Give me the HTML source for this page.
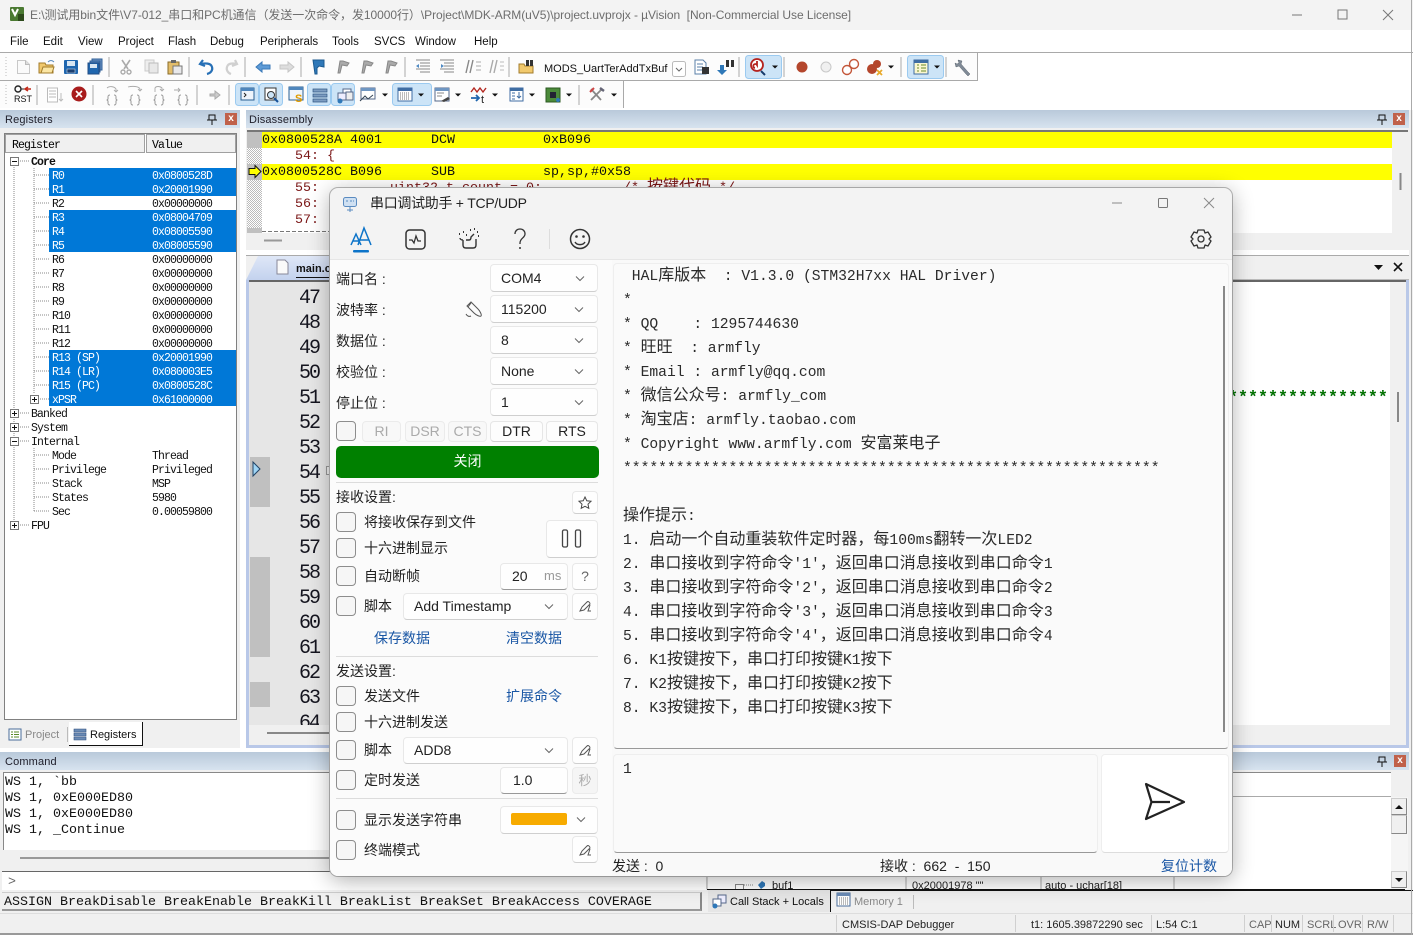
<!DOCTYPE html>
<html lang="zh"><head><meta charset="utf-8"><title>µVision</title>
<style>
html,body{margin:0;padding:0;width:1413px;height:935px;overflow:hidden;background:#f0f0f0}
body{position:relative;font-family:"Liberation Sans","Noto Sans CJK SC",sans-serif;color:#000}
div,span.a,b.a{position:absolute;white-space:pre}
svg.o{position:absolute;left:0;top:0;width:1413px;height:935px;pointer-events:none}
.m{font:11.5px "Liberation Sans",sans-serif;top:36px;color:#111}
.hd{background:linear-gradient(#b9c9da,#d7e3ef);height:18px;font-size:11px;letter-spacing:.15px;line-height:20px;color:#20202c}
.r{font:11.5px/18px "Liberation Mono","Noto Sans CJK SC",monospace;letter-spacing:-.9px;left:52px;height:14px;color:#111}
.v{left:152px}
.s{background:#0078d7;color:#fff;left:49px;width:187px;height:14px}
.s span{position:absolute;top:0;font:11.5px/18px "Liberation Mono",monospace;letter-spacing:-.9px}
.mono{font:13.33px/16px "Liberation Mono","Noto Sans CJK SC",monospace;color:#111;margin-top:1px}
.dr{color:#7a1616}
.gn{font:20px/25px "Liberation Mono",monospace;left:299px;letter-spacing:-2px;color:#15151f;margin-top:3px}
.st{font-size:11px;top:919px;color:#222}
.stg{color:#666}
#dlg{left:330px;top:188px;width:902px;height:688px;background:#f3f3f3;border-radius:8px;box-shadow:0 4px 22px rgba(0,0,0,.32),0 0 0 1px #bdbdbd;z-index:10}
.D{z-index:11;font-size:14px;line-height:20px;color:#222}
.l{left:336px;color:#222}
.c{background:#fefefe;border:1px solid #e8e8e8;border-bottom-color:#cfcfcf;border-radius:4px;box-sizing:border-box}
.c span{position:absolute;left:10px;top:4px;font-size:14px;line-height:18px;color:#222}
.k{width:20px;height:20px;left:336px;background:#f6f6f6;border:1px solid #8d8d8d;border-radius:4px;box-sizing:border-box}
.sg{top:421px;height:21px;box-sizing:border-box;background:#fdfdfd;border:1px solid #e6e6e6;border-bottom-color:#d0d0d0;border-radius:4px;text-align:center;font-size:14px;line-height:19px;color:#222}
.dis{background:#f8f8f8;color:#aaa;border-color:#ebebeb}
.h{left:336px;width:262px;height:1px;background:#dcdcdc}
.lk{color:#1a57a5}
.t{font:14.67px/24px "Liberation Mono",monospace;left:623px;color:#2a2a2a;margin-top:4px}
.t i{font:normal 16px/0 "Noto Sans CJK SC",sans-serif}
</style></head><body>

<!-- title bar -->
<div style="left:0;top:0;width:1413px;height:30px;background:#f3f3f3"></div>
<div style="left:30px;top:8px;font-size:12px;letter-spacing:-.06px;line-height:14px;color:#6d6d6d">E:\测试用bin文件\V7-012_串口和PC机通信（发送一次命令，发10000行）\Project\MDK-ARM(uV5)\project.uvprojx - µVision  [Non-Commercial Use License]</div>
<div style="left:0;top:30px;width:1413px;height:80px;background:#fff"></div>
<div class="m" style="left:10px">File</div><div class="m" style="left:43px">Edit</div><div class="m" style="left:78px">View</div><div class="m" style="left:118px">Project</div><div class="m" style="left:168px">Flash</div><div class="m" style="left:210px">Debug</div><div class="m" style="left:260px">Peripherals</div><div class="m" style="left:332px">Tools</div><div class="m" style="left:374px">SVCS</div><div class="m" style="left:415px">Window</div><div class="m" style="left:474px">Help</div>

<!-- toolbars -->
<div style="left:0;top:52px;width:1413px;height:1px;background:#a9a9a9"></div>
<div style="left:0;top:53px;width:977px;height:27px;background:#fcfcfc;border-right:1px solid #a9a9a9;border-bottom:1px solid #a9a9a9"></div>
<div style="left:0;top:81px;width:623px;height:27px;background:#fcfcfc;border-right:1px solid #a9a9a9"></div>
<div style="left:544px;top:62px;font-size:11px;line-height:14px;color:#111">MODS_UartTerAddTxBuf</div>

<svg class="o" viewBox="0 0 1413 935">
<defs>
<g id="dn"><path d="M-3-1.500h6L0 1.500z" fill="#111"/></g>
<g id="br"><path d="M-2-3c-2 0-2 1-2 2v2l-1 1 1 1v2c0 1 0 2 2 2M2-3c2 0 2 1 2 2v2l1 1-1 1v2c0 1 0 2-2 2" fill="none" stroke="#999" transform="translate(0,2)"/></g>
<g id="fl"><path d="M-5 6 L-3-6h3l6 2-2 3-5-1-2 8z" fill="#aaa" stroke="#888"/></g>
</defs>
<!-- app icon -->
<rect x="10" y="7" width="14" height="14" rx="1" fill="#4b7a32"/><path d="M12 9l3 6 3-6" stroke="#fff" stroke-width="2" fill="none"/><rect x="18" y="14" width="6" height="7" fill="#2d4a1c"/>
<!-- window controls -->
<path d="M1292 15h10" stroke="#777"/><rect x="1338" y="10" width="9" height="9" fill="none" stroke="#777"/><path d="M1383 10l10 10M1393 10l-10 10" stroke="#777"/>
<!-- seps -->
<path d="M109 57v20M189 57v20M245 57v20M301 57v20M405 57v20M509 57v20M739 57v20M784 57v20M901 57v20M946 57v20" stroke="#aaa" />
<path d="M6 57v20" stroke="#bbb" stroke-dasharray="1 2"/>
<path d="M6 85v20" stroke="#bbb" stroke-dasharray="1 2"/>
<path d="M37 85v20M93 85v20M197 85v20M229 85v20M579 85v20" stroke="#aaa"/>
<!-- highlights row1 -->
<rect x="745.500" y="55.500" width="36" height="23" rx="3" fill="#cce4f7" stroke="#9bcaf0"/>
<rect x="907.500" y="55.500" width="36" height="23" rx="3" fill="#cce4f7" stroke="#9bcaf0"/>
<!-- highlights row2 -->
<rect x="235.500" y="83.500" width="23" height="22" rx="3" fill="#cce4f7" stroke="#9bcaf0"/>
<rect x="259.500" y="83.500" width="23" height="22" rx="3" fill="#cce4f7" stroke="#9bcaf0"/>
<rect x="307.500" y="83.500" width="23" height="22" rx="3" fill="#cce4f7" stroke="#9bcaf0"/>
<rect x="331.500" y="83.500" width="23" height="22" rx="3" fill="#cce4f7" stroke="#9bcaf0"/>
<rect x="392.500" y="83.500" width="39" height="22" rx="3" fill="#cce4f7" stroke="#9bcaf0"/>
<!-- row1 icons -->
<path d="M17.500 60.500h8l4 4v9h-12z" fill="#fafafa" stroke="#c8c8c8"/><path d="M25.500 60.500v4h4" fill="#ddd" stroke="#bbb"/>
<path d="M39 63h6l1 2h7v8H39z" fill="#f1c96d" stroke="#a27c2b"/><path d="M41 73l2-6h11l-2 6z" fill="#fbe6a4" stroke="#a27c2b"/><path d="M48 62c2-2 4-2 6 0" stroke="#5a8bbd" fill="none"/>
<rect x="64" y="60" width="14" height="14" rx="1" fill="#1f66ae"/><rect x="67" y="61" width="8" height="5" fill="#d8e6f2"/><rect x="67" y="69" width="8" height="4" fill="#1a3f70" stroke="#c8d6e6" stroke-width=".6"/>
<rect x="92" y="59" width="10" height="11" fill="#6f96c2" stroke="#2f5f99"/><rect x="90" y="61" width="10" height="11" fill="#4f80b6" stroke="#2f5f99"/><rect x="88" y="63" width="11" height="11" fill="#1f66ae" stroke="#214d85"/><rect x="90" y="64" width="7" height="4" fill="#d8e6f2"/>
<path d="M122 60l6 9M130 60l-6 9" stroke="#aaa" stroke-width="1.600"/><circle cx="123" cy="72" r="2" fill="none" stroke="#aaa" stroke-width="1.400"/><circle cx="129" cy="72" r="2" fill="none" stroke="#aaa" stroke-width="1.400"/>
<rect x="145" y="60" width="9" height="11" fill="#eee" stroke="#ccc"/><rect x="149" y="63" width="9" height="10" fill="#e8e8e8" stroke="#bbb"/>
<rect x="168" y="62" width="11" height="12" fill="#e3bd6a" stroke="#8a6d2a"/><rect x="171" y="60" width="5" height="3" fill="#666"/><rect x="173" y="66" width="9" height="8" fill="#e8e8ea" stroke="#777"/>
<path d="M203 60l-3 4 5 2M201 64c4-1 10-1 11 3 1 3-1 6-5 7" fill="none" stroke="#2770b6" stroke-width="2.200"/>
<path d="M235 60l2 4-5 2M237 64c-4-1-9-1-10 3-1 3 1 6 4 7" fill="none" stroke="#d0d0d0" stroke-width="2.200"/>
<path d="M256 67l6-5v3h8v4h-8v3z" fill="#5d9ad6" stroke="#3a79b8"/>
<path d="M294 67l-6-5v3h-8v4h8v3z" fill="#ddd" stroke="#c6c6c6"/>
<path d="M313 60h11v7l-5-1-2 2v6h-2z" fill="#2f78b8" stroke="#1b5a90"/>
<use href="#fl" x="343" y="67"/><use href="#fl" x="367" y="67"/><use href="#fl" x="391" y="67"/>
<path d="M416 60h14M420 63h10M420 66h10M416 69h14M420 72h10" stroke="#888" /><path d="M416 66l3-2v4z" fill="#4f8ac4"/>
<path d="M440 60h14M444 63h10M444 66h10M440 69h14M444 72h10" stroke="#888"/><path d="M444 66l-3-2v4z" fill="#4f8ac4"/>
<path d="M466 73l3-13M470 73l3-13" stroke="#888" stroke-width="1.400"/><path d="M476 62h5M476 66h5M476 70h5" stroke="#aaa"/>
<path d="M490 73l3-13M494 73l3-13" stroke="#aaa" stroke-width="1.400"/><path d="M500 62h4M500 66h4M500 70h4" stroke="#bbb"/>
<path d="M519 64h5l1 2h8v7h-14z" fill="#f1c96d" stroke="#a27c2b"/><rect x="526" y="60" width="3" height="6" fill="#333"/><rect x="530" y="60" width="3" height="6" fill="#333"/>
<rect x="672.500" y="61.500" width="13" height="15" rx="2" fill="#fff" stroke="#bbb"/><path d="M676 68l3 3 3-3" fill="none" stroke="#666"/>
<path d="M695 60h8l3 3v11h-11z" fill="#fff" stroke="#5a7fa8"/><path d="M697 64h6M697 67h6M697 70h6" stroke="#5a7fa8"/><rect x="702" y="67" width="7" height="7" fill="#333"/>
<path d="M720 65h4v5h3l-5 5-5-5h3z" fill="#2f78b8"/><rect x="726" y="60" width="3" height="7" fill="#333"/><rect x="731" y="60" width="3" height="7" fill="#333"/>
<circle cx="757" cy="65" r="6" fill="#fff" stroke="#b4231f" stroke-width="1.800"/><path d="M755 68a2 2 0 1 1 2-3v-4" fill="none" stroke="#b4231f" stroke-width="1.800"/><path d="M761 71l4 4" stroke="#173a6a" stroke-width="2"/>
<use href="#dn" x="775" y="67"/><use href="#dn" x="891" y="67"/><use href="#dn" x="937" y="67"/>
<circle cx="802" cy="67" r="5.500" fill="#b4462c"/>
<circle cx="826" cy="67" r="5" fill="#f0f0f0" stroke="#c8c8c8"/>
<circle cx="854" cy="64" r="4.500" fill="#fff" stroke="#c4573a" stroke-width="1.400"/><circle cx="847" cy="70" r="4.500" fill="#fff" stroke="#c4573a" stroke-width="1.400"/>
<circle cx="877" cy="64" r="4" fill="#b4462c"/><circle cx="872" cy="69" r="5" fill="#b4462c"/><path d="M877 70l5 5M882 70l-5 5" stroke="#e8a92b" stroke-width="1.800"/>
<rect x="914" y="60" width="14" height="14" fill="#fbf7d0" stroke="#3f6da3"/><rect x="914" y="60" width="14" height="3" fill="#3f6da3"/><path d="M917 65h2M921 65h5M917 68h2M921 68h5M917 71h2M921 71h5" stroke="#6a8a2a"/>
<path d="M958 60l4 1-1 3 7 8 2 2-2 2-2-2-7-8-3 1-1-4 2 1 2-1z" fill="#808a96" stroke="#5c6670" stroke-width=".5"/>
<!-- row2 icons -->
<circle cx="18" cy="89" r="3" fill="none" stroke="#222" stroke-width="1.400"/><path d="M21 89h5" stroke="#222"/><path d="M25 89h6M28 87l-3 2 3 2" stroke="#c42b1c" stroke-width="1.600" fill="none"/>
<text x="14" y="102" font-family="Liberation Sans" font-size="9" fill="#111">RST</text>
<path d="M47.500 88h10v14h-10z" fill="#fff" stroke="#bbb"/><path d="M49 91h7M49 94h7M49 97h7" stroke="#bbb"/><path d="M61 93v8M59 99l2 2 2-2" stroke="#bbb" fill="none"/>
<circle cx="79" cy="94" r="7.500" fill="#a81c1c"/><path d="M76 91l6 6M82 91l-6 6" stroke="#fff" stroke-width="1.600"/>
<use href="#br" x="112" y="96"/><use href="#br" x="135" y="96"/><use href="#br" x="159" y="96"/><use href="#br" x="183" y="96"/>
<path d="M107 88c2-2 7-2 9 1v3M114 90l2 2 2-2M128 87c4-1 11-1 12 2v2M138 89l2 2 2-2M155 92v-4c1-2 5-2 7 0v3M160 89l2 2 2-2M174 90h6M178 88l2 2-2 2" fill="none" stroke="#aaa" stroke-width=".9"/>
<path d="M210 94l5 0v-3l5 4-5 4v-3h-5z" fill="#ccc" stroke="#aaa"/>
<rect x="241" y="88" width="13" height="12" fill="#eef4fb" stroke="#2a5f93"/><rect x="241" y="88" width="13" height="3" fill="#4f86bc"/><path d="M244 93l2 2-2 2" stroke="#222" fill="none"/>
<rect x="265" y="88" width="11" height="12" fill="#fff" stroke="#333"/><circle cx="271" cy="95" r="3.500" fill="#cce4f7" stroke="#333"/><path d="M274 98l4 4" stroke="#17539a" stroke-width="2"/>
<rect x="289" y="87" width="14" height="13" fill="#eef4fb" stroke="#2a5f93"/><rect x="289" y="87" width="14" height="3" fill="#4f86bc"/><text x="295" y="102" font-family="Liberation Sans" font-weight="bold" font-size="11" fill="#e09b00">S</text>
<path d="M313 89h14v3h-14zM313 94h14v3h-14zM313 99h14v3h-14z" fill="#7d9dc1" stroke="#2f5783" stroke-width=".7"/>
<rect x="343" y="89" width="8" height="8" fill="#fff" stroke="#56688a"/><rect x="346" y="92" width="7" height="8" fill="#eee" stroke="#56688a"/><rect x="338" y="93" width="8" height="7" fill="#eef" stroke="#56688a"/><circle cx="340" cy="101" r="2.500" fill="#2f78b8"/>
<rect x="361" y="88" width="14" height="11" fill="#fff" stroke="#56688a"/><rect x="361" y="88" width="14" height="3" fill="#6f96c2"/><path d="M360 101l5-5 3 3 5-4" stroke="#345" fill="none"/>
<use href="#dn" x="385" y="95"/>
<rect x="398" y="88" width="14" height="13" fill="#fff" stroke="#3f6da3"/><rect x="398" y="88" width="14" height="3" fill="#3f6da3"/><path d="M400 93h10M400 95h10M400 97h10M400 99h10" stroke="#777" stroke-dasharray="1 1"/>
<use href="#dn" x="421" y="95"/>
<rect x="435" y="88" width="14" height="13" fill="#fff" stroke="#56688a"/><rect x="435" y="88" width="14" height="3" fill="#6f96c2"/><path d="M437 93h7M437 96h5" stroke="#888"/><path d="M441 101l7-4 2 2-6 3z" fill="#444"/>
<use href="#dn" x="458" y="95"/>
<path d="M471 92l3-4 3 4 3-4 3 4 3-4" fill="none" stroke="#b3271f" stroke-width="1.400"/><path d="M471 98h8M476 95l3 3-3 3" stroke="#1f66ae" stroke-width="1.800" fill="none"/><text x="481" y="103" font-family="Liberation Sans" font-size="11" fill="#222">t</text>
<use href="#dn" x="495" y="95"/>
<rect x="510" y="88" width="13" height="13" fill="#fff" stroke="#3f6da3"/><rect x="510" y="88" width="13" height="3" fill="#3f6da3"/><path d="M512 93h3M512 96h3M512 99h3M519 92v6M517 96l2 2 2-2" stroke="#3f6da3" fill="none"/>
<use href="#dn" x="532" y="95"/>
<rect x="546" y="88" width="14" height="14" fill="#4b8a3a" stroke="#2d5a22"/><rect x="550" y="92" width="6" height="6" fill="#223"/><circle cx="558" cy="100" r="2" fill="#2f78b8"/>
<use href="#dn" x="569" y="95"/>
<path d="M591 89l10 11M602 89l-11 11" stroke="#888" stroke-width="1.800"/><path d="M590 92l4-4" stroke="#c44" stroke-width="2"/><path d="M600 88l4 3" stroke="#667" stroke-width="2.400"/>
<use href="#dn" x="614" y="95"/>
</svg>

<!-- panel headers -->
<div class="hd" style="left:0;top:110px;width:240px"><span style="position:absolute;left:5px">Registers</span></div>
<div style="left:240px;top:110px;width:6px;height:22px;background:#fff"></div>
<div class="hd" style="left:246px;top:110px;width:1163px"><span style="position:absolute;left:3px">Disassembly</span></div>
<div style="left:225px;top:113px;width:12px;height:12px;background:#c0614a;color:#fff;font:bold 10px/12px 'Liberation Sans';text-align:center">x</div>
<div style="left:1393px;top:113px;width:12px;height:12px;background:#c0614a;color:#fff;font:bold 10px/12px 'Liberation Sans';text-align:center">x</div>

<!-- registers panel -->
<div style="left:0;top:128px;width:240px;height:594px;background:#f0f0f0"></div>
<div style="left:4px;top:133px;width:233px;height:587px;background:#fff;border:1px solid #808080;box-sizing:border-box"></div>
<div style="left:5px;top:134px;width:140px;height:19px;background:#f0f0f0;border:1px solid #a0a0a0;box-sizing:border-box;font:11.5px/22px 'Liberation Mono';letter-spacing:-.9px;padding-left:6px">Register</div>
<div style="left:146px;top:134px;width:90px;height:19px;background:#f0f0f0;border:1px solid #a0a0a0;box-sizing:border-box;font:11.5px/22px 'Liberation Mono';letter-spacing:-.9px;padding-left:5px">Value</div>
<div class="r" style="left:31px;top:154px;font-weight:bold">Core</div>
<div class="s" style="top:168px"><span style="left:3px">R0</span><span style="left:103px">0x0800528D</span></div>
<div class="s" style="top:182px"><span style="left:3px">R1</span><span style="left:103px">0x20001990</span></div>
<div class="r" style="top:196px">R2</div><div class="r v" style="top:196px">0x00000000</div>
<div class="s" style="top:210px"><span style="left:3px">R3</span><span style="left:103px">0x08004709</span></div>
<div class="s" style="top:224px"><span style="left:3px">R4</span><span style="left:103px">0x08005590</span></div>
<div class="s" style="top:238px"><span style="left:3px">R5</span><span style="left:103px">0x08005590</span></div>
<div class="r" style="top:252px">R6</div><div class="r v" style="top:252px">0x00000000</div>
<div class="r" style="top:266px">R7</div><div class="r v" style="top:266px">0x00000000</div>
<div class="r" style="top:280px">R8</div><div class="r v" style="top:280px">0x00000000</div>
<div class="r" style="top:294px">R9</div><div class="r v" style="top:294px">0x00000000</div>
<div class="r" style="top:308px">R10</div><div class="r v" style="top:308px">0x00000000</div>
<div class="r" style="top:322px">R11</div><div class="r v" style="top:322px">0x00000000</div>
<div class="r" style="top:336px">R12</div><div class="r v" style="top:336px">0x00000000</div>
<div class="s" style="top:350px"><span style="left:3px">R13 (SP)</span><span style="left:103px">0x20001990</span></div>
<div class="s" style="top:364px"><span style="left:3px">R14 (LR)</span><span style="left:103px">0x080003E5</span></div>
<div class="s" style="top:378px"><span style="left:3px">R15 (PC)</span><span style="left:103px">0x0800528C</span></div>
<div class="s" style="top:392px"><span style="left:3px">xPSR</span><span style="left:103px">0x61000000</span></div>
<div class="r" style="left:31px;top:406px">Banked</div>
<div class="r" style="left:31px;top:420px">System</div>
<div class="r" style="left:31px;top:434px">Internal</div>
<div class="r" style="top:448px">Mode</div><div class="r v" style="top:448px">Thread</div>
<div class="r" style="top:462px">Privilege</div><div class="r v" style="top:462px">Privileged</div>
<div class="r" style="top:476px">Stack</div><div class="r v" style="top:476px">MSP</div>
<div class="r" style="top:490px">States</div><div class="r v" style="top:490px">5980</div>
<div class="r" style="top:504px">Sec</div><div class="r v" style="top:504px">0.00059800</div>
<div class="r" style="left:31px;top:518px">FPU</div>
<svg class="o" viewBox="0 0 1413 935">
<path d="M14 165V521M34 168V394M34 448V511" stroke="#888" stroke-dasharray="1 1" fill="none"/>
<path d="M18 161h12M18 413h12M18 427h12M18 441h12M18 525h12M34 175h15M34 189h15M34 203h15M34 217h15M34 231h15M34 245h15M34 259h15M34 273h15M34 287h15M34 301h15M34 315h15M34 329h15M34 343h15M34 357h15M34 371h15M34 385h15M38 399h11M34 455h15M34 469h15M34 483h15M34 497h15M34 511h15" stroke="#888" stroke-dasharray="1 1"/>
<g fill="#fff" stroke="#777"><rect x="10.500" y="157.500" width="8" height="8"/><rect x="10.500" y="409.500" width="8" height="8"/><rect x="10.500" y="423.500" width="8" height="8"/><rect x="10.500" y="437.500" width="8" height="8"/><rect x="10.500" y="521.500" width="8" height="8"/><rect x="30.500" y="395.500" width="8" height="8"/></g>
<path d="M12 161.500h5M12 413.500h5M14.500 411v5M12 427.500h5M14.500 425v5M12 441.500h5M12 525.500h5M14.500 523v5M32 399.500h5M34.500 397v5" stroke="#111"/>
<!-- pins -->
<path d="M209 115h6v5h-6zM212 120v5M207 120h10" stroke="#111" fill="none"/>
<path d="M1379 115h6v5h-6zM1382 120v5M1377 120h10" stroke="#111" fill="none"/>
</svg>

<!-- bottom-left tabs -->
<div style="left:0;top:722px;width:240px;height:26px;background:#f0f0f0"></div>
<div style="left:69px;top:722px;width:74px;height:24px;background:#fff;border-right:1px solid #111;border-bottom:1px solid #111;box-sizing:border-box"></div>
<div style="left:25px;top:728px;font-size:11px;line-height:14px;color:#888">Project</div>
<div style="left:90px;top:728px;font-size:11px;line-height:14px;color:#111">Registers</div>
<svg class="o" viewBox="0 0 1413 935"><rect x="9" y="729" width="12" height="11" fill="#fff" stroke="#4a6d9a"/><path d="M11 732h2M14 732h5M11 734.500h2M14 734.500h5M11 737h2M14 737h5" stroke="#5a8a2a"/><path d="M74 729h12v3h-12zM74 733h12v3h-12zM74 737h12v3h-12z" fill="#6b8bb5" stroke="#2f4f7f" stroke-width=".6"/><path d="M67.500 727v15" stroke="#bbb"/></svg>

<!-- disassembly -->
<div style="left:240px;top:128px;width:6px;height:620px;background:#fff"></div>
<div style="left:246px;top:128px;width:1163px;height:122px;background:#f0f0f0"></div>
<div style="left:247px;top:130px;width:1161px;height:2px;background:#777"></div>
<div style="left:247px;top:132px;width:1145px;height:101px;background:#fff"></div>
<div style="left:247px;top:132px;width:15px;height:101px;background:#fff repeating-conic-gradient(#bbb 0 25%,#fff 0 50%) 0 0/2px 2px"></div>
<div style="left:247px;top:132px;width:15px;height:16px;background:#c0c0c0"></div>
<div style="left:247px;top:164px;width:15px;height:16px;background:#c0c0c0"></div>
<div style="left:247px;top:228px;width:15px;height:5px;background:#c0c0c0"></div>
<div style="left:262px;top:132px;width:1130px;height:16px;background:#ff0"></div>
<div style="left:262px;top:164px;width:1130px;height:16px;background:#ff0"></div>
<div class="mono" style="left:262px;top:132px">0x0800528A 4001</div><div class="mono" style="left:431px;top:132px">DCW</div><div class="mono" style="left:543px;top:132px">0xB096</div>
<div class="mono dr" style="left:295px;top:148px">54: {</div>
<div class="mono" style="left:262px;top:164px">0x0800528C B096</div><div class="mono" style="left:431px;top:164px">SUB</div><div class="mono" style="left:543px;top:164px">sp,sp,#0x58</div>
<div class="mono dr" style="left:295px;top:180px">55:</div><div class="mono dr" style="left:390px;top:180px">uint32_t count = 0;</div>
<div class="mono dr" style="left:623px;top:180px">/* <span style="font-size:16px;line-height:0">按键代码</span> */</div>
<div class="mono dr" style="left:295px;top:196px">56:</div>
<div class="mono dr" style="left:295px;top:212px">57:</div>
<svg class="o" viewBox="0 0 1413 935"><path d="M262 231.500h68" stroke="#777" stroke-dasharray="4 2"/><path d="M264 240.500h18" stroke="#999" stroke-width="2"/><path d="M1400.500 173v17" stroke="#888" stroke-width="2"/>
<path d="M249 168.500h6v-3l6 6-6 6v-3h-6z" fill="#ff0" stroke="#111"/></svg>

<!-- editor -->
<div style="left:246px;top:250px;width:1163px;height:5px;background:#fff"></div>
<div style="left:246px;top:255px;width:1163px;height:494px;background:#f0f0f0;border-top:1px solid #aaa;box-sizing:border-box"></div>
<div style="left:246px;top:256px;width:84px;height:24px;background:linear-gradient(#dfe7f7,#c3d2ee);clip-path:polygon(12px 0,100% 0,100% 100%,0 100%,0 24px)"></div>
<div style="left:296px;top:262px;font:bold 11px/14px 'Liberation Sans';color:#111;border-bottom:1px solid #111;padding-bottom:1px;width:34px">main.c</div>
<div style="left:1233px;top:279px;width:176px;height:1px;background:#bbb"></div>
<div style="left:247px;top:280px;width:1159px;height:2px;background:#666"></div>
<div style="left:246px;top:280px;width:3px;height:468px;background:#b9c8e8"></div>
<div style="left:1406px;top:280px;width:3px;height:468px;background:#b9c8e8"></div>
<div style="left:246px;top:745px;width:1163px;height:3px;background:#b9c8e8"></div>
<div style="left:249px;top:282px;width:1141px;height:443px;background:#fff"></div>
<div style="left:249px;top:282px;width:84px;height:443px;background:#e6e6e6;overflow:hidden"></div>
<div style="left:250px;top:457px;width:20px;height:50px;background:#c0c0c0"></div>
<div style="left:250px;top:557px;width:20px;height:100px;background:#c0c0c0"></div>
<div style="left:250px;top:682px;width:20px;height:25px;background:#c0c0c0"></div>
<div class="gn" style="top:283px">47</div><div class="gn" style="top:308px">48</div><div class="gn" style="top:333px">49</div><div class="gn" style="top:358px">50</div><div class="gn" style="top:383px">51</div><div class="gn" style="top:408px">52</div><div class="gn" style="top:433px">53</div><div class="gn" style="top:458px">54</div><div class="gn" style="top:483px">55</div><div class="gn" style="top:508px">56</div><div class="gn" style="top:533px">57</div><div class="gn" style="top:558px">58</div><div class="gn" style="top:583px">59</div><div class="gn" style="top:608px">60</div><div class="gn" style="top:633px">61</div><div class="gn" style="top:658px">62</div><div class="gn" style="top:683px">63</div><div class="gn" style="top:708px;height:14px;overflow:hidden">64</div>
<div style="left:1228px;top:391px;font:bold 16.67px/16px 'Liberation Mono';color:#007000">****************</div>
<svg class="o" viewBox="0 0 1413 935">
<path d="M253 462l7 7-7 7z" fill="#9ed4f4" stroke="#246"/>
<rect x="326.500" y="466.500" width="8" height="8" fill="#eee" stroke="#999"/>
<path d="M1374 265h9l-4.500 5z" fill="#111"/><path d="M1394 263l8 8M1402 263l-8 8" stroke="#111" stroke-width="1.600"/>
<path d="M1398 392v30" stroke="#888" stroke-width="2"/><path d="M267 733h63" stroke="#888" stroke-width="2"/>
<path d="M277 260h8l3 3v11h-11z" fill="#fafafa" stroke="#889"/>
</svg>

<!-- command panel -->
<div style="left:0;top:748px;width:1409px;height:4px;background:#fff"></div>
<div class="hd" style="left:0;top:752px;width:1409px"><span style="position:absolute;left:5px">Command</span></div>
<div style="left:1394px;top:755px;width:12px;height:12px;background:#c0614a;color:#fff;font:bold 10px/12px 'Liberation Sans';text-align:center">x</div>
<div style="left:0;top:770px;width:1409px;height:120px;background:#f0f0f0"></div>
<div style="left:3px;top:772px;width:1388px;height:78px;background:#fff;border-top:1px solid #888;border-left:1px solid #888;box-sizing:border-box"></div>
<div class="mono" style="left:5px;top:774px">WS 1, `bb</div>
<div class="mono" style="left:5px;top:790px">WS 1, 0xE000ED80</div>
<div class="mono" style="left:5px;top:806px">WS 1, 0xE000ED80</div>
<div class="mono" style="left:5px;top:822px">WS 1, _Continue</div>
<div style="left:20px;top:857px;width:320px;height:2px;background:#999"></div>
<div style="left:2px;top:871px;width:704px;height:1px;background:#666"></div>
<div style="left:2px;top:872px;width:704px;height:18px;background:#fff"></div>
<div class="mono" style="left:8px;top:874px;color:#666">&gt;</div>
<!-- right of dialog -->
<div style="left:707px;top:797px;width:684px;height:92px;background:#fff"></div>
<div style="left:1232px;top:796px;width:159px;height:1px;background:#aaa"></div>
<div style="left:1391px;top:772px;width:17px;height:25px;background:#f0f0f0"></div>
<div style="left:1391px;top:797px;width:17px;height:92px;background:#f5f5f5"></div>
<div style="left:1391px;top:798px;width:16px;height:17px;background:#f0f0f0;border:1px solid #ccc;border-right-color:#888;border-bottom-color:#888;box-sizing:border-box"></div>
<div style="left:1391px;top:815px;width:16px;height:19px;background:#f0f0f0;border:1px solid #ccc;border-right-color:#888;border-bottom-color:#888;box-sizing:border-box"></div>
<div style="left:1391px;top:871px;width:16px;height:17px;background:#f0f0f0;border:1px solid #ccc;border-right-color:#888;border-bottom-color:#888;box-sizing:border-box"></div>
<div style="left:772px;top:879px;font-size:11px;line-height:14px;height:10px;overflow:hidden;color:#222">buf1</div>
<div style="left:912px;top:879px;font-size:11px;line-height:14px;height:10px;overflow:hidden;color:#222">0x20001978 ""</div>
<div style="left:1045px;top:879px;font-size:11px;line-height:14px;height:10px;overflow:hidden;color:#222">auto - uchar[18]</div>
<svg class="o" viewBox="0 0 1413 935">
<path d="M1379 757h6v5h-6zM1382 762v5M1377 762h10" stroke="#111" fill="none"/>
<path d="M1395 809l4-4 4 4z M1395 878l4 4 4-4z" fill="#111"/>
<path d="M707 876v13M906 876v13M1041 876v13M1174 876v13" stroke="#aaa"/>
<rect x="735.500" y="884.500" width="8" height="8" fill="#fff" stroke="#888"/><path d="M744 885h10" stroke="#888" stroke-dasharray="1 1"/>
<path d="M758 885l4-4 3 2v3l-4 3z" fill="#2f78b8"/>
<path d="M707 889.500h698" stroke="#111"/>
</svg>

<!-- bottom tabs/bar -->
<div style="left:0;top:890px;width:1413px;height:23px;background:#f0f0f0"></div>
<div style="left:2px;top:892px;width:700px;height:19px;background:#f0f0f0;border-top:1px solid #ccc;border-right:2px solid #888;border-bottom:2px solid #999;box-sizing:border-box"></div>
<div class="mono" style="left:4px;top:894px">ASSIGN BreakDisable BreakEnable BreakKill BreakList BreakSet BreakAccess COVERAGE</div>
<div style="left:708px;top:890px;width:123px;height:22px;background:#e6e6e6;border-right:1px solid #111;box-sizing:border-box"></div>
<div style="left:831px;top:890px;width:582px;height:1px;background:#111"></div>
<div style="left:730px;top:895px;font-size:11px;line-height:14px;color:#111">Call Stack + Locals</div>
<div style="left:854px;top:895px;font-size:11px;line-height:14px;color:#888">Memory 1</div>
<svg class="o" viewBox="0 0 1413 935">
<rect x="718" y="895" width="8" height="8" fill="#eef" stroke="#56688a"/><rect x="713" y="899" width="8" height="7" fill="#fff" stroke="#56688a"/><circle cx="715" cy="906" r="2.500" fill="#2f78b8"/>
<rect x="837" y="893" width="13" height="13" fill="#fff" stroke="#4a6d9a"/><rect x="837" y="893" width="13" height="3" fill="#6b8bb5"/><path d="M839 898h9M839 900h9M839 902h9M839 904h9" stroke="#777" stroke-dasharray="1 1"/>
<path d="M913.500 895v14" stroke="#bbb"/>
</svg>

<!-- status bar -->
<div style="left:0;top:913px;width:1413px;height:20px;background:#f0f0f0;border-top:1px solid #ddd;box-sizing:border-box"></div>
<div style="left:0;top:933px;width:1413px;height:2px;background:#999"></div>
<div style="left:1411px;top:0;width:1px;height:935px;background:#aaa"></div>
<div class="st" style="left:842px">CMSIS-DAP Debugger</div>
<div class="st" style="left:1031px">t1: 1605.39872290 sec</div>
<div class="st" style="left:1156px">L:54 C:1</div>
<div class="st stg" style="left:1249px">CAP</div><div class="st" style="left:1275px">NUM</div><div class="st stg" style="left:1307px">SCRL</div><div class="st stg" style="left:1338px">OVR</div><div class="st stg" style="left:1367px">R/W</div>
<svg class="o" viewBox="0 0 1413 935"><path d="M836.500 915v17M1015.500 915v17M1151.500 915v17M1244.500 915v17M1271.500 915v17M1302.500 915v17M1333.500 915v17M1362.500 915v17M1393.500 915v17" stroke="#d0d0d0"/></svg>

<!-- ========= dialog ========= -->
<div id="dlg"></div>
<div class="D" style="left:330px;top:259px;width:282px;height:617px;background:#fbfbfb;border-radius:0 0 0 8px"></div>
<div class="D" style="left:330px;top:259px;width:902px;height:1px;background:#e6e6e6"></div>
<div class="D" style="left:612px;top:260px;width:620px;height:616px;background:#f9f9f9;border-radius:0 0 8px 0"></div>
<div class="D" style="left:370px;top:193px;letter-spacing:-.3px">串口调试助手 + TCP/UDP</div>

<div class="D l" style="top:269px">端口名 :</div><div class="D l" style="top:300px">波特率 :</div><div class="D l" style="top:331px">数据位 :</div><div class="D l" style="top:362px">校验位 :</div><div class="D l" style="top:393px">停止位 :</div>
<div class="D c" style="left:490px;top:264px;width:108px;height:28px"><span>COM4</span></div>
<div class="D c" style="left:490px;top:295px;width:108px;height:28px"><span>115200</span></div>
<div class="D c" style="left:490px;top:326px;width:108px;height:28px"><span>8</span></div>
<div class="D c" style="left:490px;top:357px;width:108px;height:28px"><span>None</span></div>
<div class="D c" style="left:490px;top:388px;width:108px;height:28px"><span>1</span></div>

<div class="D k" style="top:421px"></div>
<div class="D sg dis" style="left:362px;width:39px">RI</div><div class="D sg dis" style="left:405px;width:40px">DSR</div><div class="D sg dis" style="left:448px;width:39px">CTS</div><div class="D sg" style="left:490px;width:53px">DTR</div><div class="D sg" style="left:546px;width:52px">RTS</div>
<div class="D" style="left:336px;top:446px;width:263px;height:32px;background:#008000;border-radius:5px;color:#fff;text-align:center;line-height:31px">关闭</div>
<div class="D h" style="top:482px"></div>

<div class="D l" style="top:487px">接收设置:</div>
<div class="D c" style="left:572px;top:491px;width:26px;height:23px"></div>
<div class="D k" style="top:512px"></div><div class="D" style="left:364px;top:512px">将接收保存到文件</div>
<div class="D c" style="left:546px;top:520px;width:52px;height:38px"></div>
<div class="D k" style="top:538px"></div><div class="D" style="left:364px;top:538px">十六进制显示</div>
<div class="D k" style="top:566px"></div><div class="D" style="left:364px;top:566px">自动断帧</div>
<div class="D c" style="left:500px;top:563px;width:68px;height:27px;border-bottom-color:#999"><span style="left:11px;top:3px">20</span><span style="left:43px;top:3px;font-size:13px;color:#999">ms</span></div>
<div class="D c" style="left:572px;top:563px;width:26px;height:27px;text-align:center;color:#666;line-height:25px">?</div>
<div class="D k" style="top:596px"></div><div class="D" style="left:364px;top:596px">脚本</div>
<div class="D c" style="left:403px;top:593px;width:165px;height:27px"><span style="top:3px">Add Timestamp</span></div>
<div class="D c" style="left:572px;top:593px;width:26px;height:27px"></div>
<div class="D lk" style="left:374px;top:628px">保存数据</div><div class="D lk" style="left:506px;top:628px">清空数据</div>
<div class="D h" style="top:656px"></div>
<div class="D l" style="top:661px">发送设置:</div>
<div class="D k" style="top:686px"></div><div class="D" style="left:364px;top:686px">发送文件</div><div class="D lk" style="left:506px;top:686px">扩展命令</div>
<div class="D k" style="top:712px"></div><div class="D" style="left:364px;top:712px">十六进制发送</div>
<div class="D k" style="top:740px"></div><div class="D" style="left:364px;top:740px">脚本</div>
<div class="D c" style="left:403px;top:737px;width:165px;height:27px"><span style="top:3px">ADD8</span></div>
<div class="D c" style="left:572px;top:737px;width:26px;height:27px"></div>
<div class="D k" style="top:770px"></div><div class="D" style="left:364px;top:770px">定时发送</div>
<div class="D c" style="left:500px;top:767px;width:68px;height:27px;border-bottom-color:#999"><span style="left:12px;top:3px">1.0</span></div>
<div class="D c dis" style="left:572px;top:767px;width:26px;height:27px;text-align:center;line-height:25px;font-size:13px;color:#aaa;background:#f5f5f5">秒</div>
<div class="D h" style="top:798px"></div>
<div class="D k" style="top:810px"></div><div class="D" style="left:364px;top:810px">显示发送字符串</div>
<div class="D c" style="left:500px;top:806px;width:98px;height:28px"></div>
<div class="D" style="left:511px;top:813px;width:56px;height:12px;background:#f7ab00;border-radius:2px"></div>
<div class="D k" style="top:840px"></div><div class="D" style="left:364px;top:840px">终端模式</div>
<div class="D c" style="left:572px;top:836px;width:26px;height:27px"></div>

<!-- receive pane -->
<div class="D" style="left:613px;top:263px;width:616px;height:486px;background:#fafafa;border:1px solid #eee;border-bottom:1px solid #999;border-radius:4px;box-sizing:border-box"></div>
<div class="D t" style="top:261px"> HAL<i>库版本</i>  : V1.3.0 (STM32H7xx HAL Driver)</div>
<div class="D t" style="top:285px">*</div>
<div class="D t" style="top:309px">* QQ    : 1295744630</div>
<div class="D t" style="top:333px">* <i>旺旺</i>  : armfly</div>
<div class="D t" style="top:357px">* Email : armfly@qq.com</div>
<div class="D t" style="top:381px">* <i>微信公众号</i>: armfly_com</div>
<div class="D t" style="top:405px">* <i>淘宝店</i>: armfly.taobao.com</div>
<div class="D t" style="top:429px">* Copyright www.armfly.com <i>安富莱电子</i></div>
<div class="D t" style="top:453px">*************************************************************</div>
<div class="D t" style="top:501px"><i>操作提示</i>:</div>
<div class="D t" style="top:525px">1. <i>启动一个自动重装软件定时器，每</i>100ms<i>翻转一次</i>LED2</div>
<div class="D t" style="top:549px">2. <i>串口接收到字符命令</i>'1'<i>，返回串口消息接收到串口命令</i>1</div>
<div class="D t" style="top:573px">3. <i>串口接收到字符命令</i>'2'<i>，返回串口消息接收到串口命令</i>2</div>
<div class="D t" style="top:597px">4. <i>串口接收到字符命令</i>'3'<i>，返回串口消息接收到串口命令</i>3</div>
<div class="D t" style="top:621px">5. <i>串口接收到字符命令</i>'4'<i>，返回串口消息接收到串口命令</i>4</div>
<div class="D t" style="top:645px">6. K1<i>按键按下，串口打印按键</i>K1<i>按下</i></div>
<div class="D t" style="top:669px">7. K2<i>按键按下，串口打印按键</i>K2<i>按下</i></div>
<div class="D t" style="top:693px">8. K3<i>按键按下，串口打印按键</i>K3<i>按下</i></div>

<!-- send pane -->
<div class="D" style="left:613px;top:754px;width:485px;height:99px;background:#fafafa;border:1px solid #eee;border-bottom:1px solid #999;border-radius:4px;box-sizing:border-box"></div>
<div class="D t" style="top:754px">1</div>
<div class="D" style="left:1101px;top:754px;width:128px;height:99px;background:#fff;border:1px solid #eee;border-bottom-color:#ddd;border-radius:4px;box-sizing:border-box"></div>
<div class="D" style="left:612px;top:856px">发送 :  0</div>
<div class="D" style="left:880px;top:856px">接收 :  662  -  150</div>
<div class="D lk" style="left:1161px;top:856px">复位计数</div>

<!-- dialog icons -->
<svg class="o" viewBox="0 0 1413 935" style="z-index:12">
<!-- title icon -->
<rect x="343.500" y="197.500" width="13" height="9" rx="2" fill="#cfe0f2" stroke="#5a8bc0"/><path d="M347 210h6M350 207v5" stroke="#5a8bc0"/><path d="M346 201h2M350 201h2M353 201h1" stroke="#5a8bc0"/>
<path d="M1112 203h10" stroke="#888"/><rect x="1158.500" y="198.500" width="9" height="9" rx="1" fill="none" stroke="#777"/><path d="M1204 198l10 10M1214 198l-10 10" stroke="#888"/>
<!-- A A -->
<path d="M351 245l5-11 5 11M353 241h6M358 245l6-17 7 17M360 240h9" fill="none" stroke="#0d74c9" stroke-width="1.500"/><rect x="353" y="250" width="16" height="2.500" rx="1" fill="#0d74c9"/>
<!-- activity -->
<rect x="406" y="230" width="19" height="19" rx="3.500" fill="none" stroke="#333" stroke-width="1.500"/><path d="M409 240h3l2 3 2-7 2 5h3" fill="none" stroke="#333" stroke-width="1.300"/>
<!-- sparkle bag -->
<path d="M463 240v5c0 2 1 3 3 3h7c2 0 3-1 3-3v-6M463 240c-2 0-3-1-3-2M466 240h3c2 0 2-2 2-3l3-3" fill="none" stroke="#333" stroke-width="1.400"/><path d="M459 234h1M463 232h1M466 235h1M470 230h1M474 229h1M477 232h1M478 236h1" stroke="#333" stroke-width="2"/>
<!-- ? -->
<path d="M515 234c0-3 2-5 5-5s5 2 5 5c0 4-5 4-5 9v1" fill="none" stroke="#333" stroke-width="1.300"/><circle cx="520" cy="248" r="1" fill="#333"/>
<path d="M549.500 229v20" stroke="#ddd"/>
<!-- smile -->
<circle cx="580" cy="239" r="9.500" fill="none" stroke="#333" stroke-width="1.500"/><circle cx="576.500" cy="236.500" r="1.300" fill="#333"/><circle cx="583.500" cy="236.500" r="1.300" fill="#333"/><path d="M575 242c2 3.500 8 3.500 10 0" fill="none" stroke="#333" stroke-width="1.400"/>
<!-- gear -->
<path d="M1198 230h6l1 3 3-1 3 5-2 2 2 2-3 5-3-1-1 3h-6l-1-3-3 1-3-5 2-2-2-2 3-5 3 1z" fill="none" stroke="#333" stroke-width="1.300" stroke-linejoin="round"/><circle cx="1201" cy="239" r="3" fill="none" stroke="#333" stroke-width="1.300"/>
<!-- chevrons -->
<g fill="none" stroke="#666" stroke-width="1"><path d="M576 276.500l4 4 4-4M575 307.500l4 4 4-4M575 338.500l4 4 4-4M575 369.500l4 4 4-4M575 400.500l4 4 4-4M545 604.500l4 4 4-4M545 748.500l4 4 4-4M577 817.500l4 4 4-4"/></g>
<!-- antenna -->
<path d="M467 306l7 7c2 2 6 4 7 3s-1-5-3-7l-7-7zM471 303l-3 4M466 314c1 2 3 3 5 2" fill="none" stroke="#555" stroke-width="1"/>
<!-- star -->
<path d="M585 497l1.800 3.800 4.200.5-3 2.900.8 4.100-3.800-2-3.800 2 .8-4.100-3-2.900 4.200-.5z" fill="none" stroke="#444"/>
<!-- pause -->
<rect x="562.500" y="530" width="5" height="17" rx="1.500" fill="none" stroke="#444" stroke-width="1.300"/><rect x="575.500" y="530" width="5" height="17" rx="1.500" fill="none" stroke="#444" stroke-width="1.300"/>
<!-- pencils -->
<g fill="none" stroke="#555" stroke-width="1"><path d="M580 611l2-4 5-5c1-1 3 0 3 2l-6 6zM590 605l-2 6h3"/><path d="M580 755l2-4 5-5c1-1 3 0 3 2l-6 6zM590 749l-2 6h3M580 855l2-4 5-5c1-1 3 0 3 2l-6 6zM590 849l-2 6h3"/></g>
<!-- send -->
<path d="M1146 784l38 18-38 17 5.500-17zM1151.500 802h18.500" fill="none" stroke="#222" stroke-width="2.200" stroke-linejoin="round"/>
<!-- scroll -->
<path d="M1224 286v446" stroke="#888" stroke-width="2"/>
</svg>
</body></html>
